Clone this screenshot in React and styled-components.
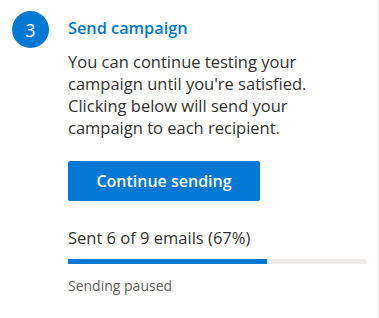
import React from "react";
import styled, { createGlobalStyle } from "styled-components";

const GlobalStyle = createGlobalStyle`
  html, body {
    margin: 0;
    padding: 0;
    background: #ffffff;
  }
  body {
    font-family: "Open Sans", "Noto Sans", sans-serif;
    color: #323130;
  }
`;

const Panel = styled.div`
  width: 379px;
  height: 318px;
  box-sizing: border-box;
  border-right: 1px solid #edebe9;
  display: flex;
  gap: 19px;
  padding: 11px 12px 0 12px;
`;

const StepBadge = styled.div`
  flex: 0 0 37px;
  width: 37px;
  height: 37px;
  border-radius: 50%;
  background: #0078d4;
  color: #ffffff;
  display: flex;
  align-items: center;
  justify-content: center;
  font-size: 18px;
  line-height: 1;
`;

const Content = styled.div`
  flex: 1;
  display: flex;
  flex-direction: column;
`;

const Title = styled.h2`
  margin: 6px 0 0 0;
  font-size: 16.3px;
  font-weight: 600;
  line-height: 22px;
  color: #0078d4;
`;

const Description = styled.p`
  margin: 12px 0 0 0;
  max-width: 256px;
  font-size: 16.5px;
  line-height: 22px;
  color: #323130;
`;

const PrimaryButton = styled.button`
  margin-top: 22px;
  width: 192px;
  height: 40px;
  border: 0;
  border-radius: 2px;
  background: #0078d4;
  color: #ffffff;
  font-family: inherit;
  font-size: 16px;
  font-weight: 600;
  cursor: pointer;
`;

const Status = styled.div`
  margin-top: 26px;
  font-size: 16.5px;
  line-height: 22px;
  color: #323130;
`;

const Track = styled.div`
  margin-top: 10px;
  width: 298px;
  height: 5px;
  background: #edebe9;
`;

const Fill = styled.div`
  height: 100%;
  background: #0078d4;
`;

const Note = styled.div`
  margin-top: 12px;
  font-size: 14px;
  line-height: 20px;
  color: #605e5c;
`;

export default function App() {
  const sent = 6;
  const total = 9;
  const pct = Math.round((sent / total) * 100);
  return (
    <>
      <GlobalStyle />
      <Panel>
        <StepBadge>3</StepBadge>
        <Content>
          <Title>Send campaign</Title>
          <Description>
            You can continue testing your campaign until you're satisfied.
            Clicking below will send your campaign to each recipient.
          </Description>
          <PrimaryButton>Continue sending</PrimaryButton>
          <Status>
            Sent {sent} of {total} emails ({pct}%)
          </Status>
          <Track>
            <Fill style={{ width: `${(sent / total) * 100}%` }} />
          </Track>
          <Note>Sending paused</Note>
        </Content>
      </Panel>
    </>
  );
}
